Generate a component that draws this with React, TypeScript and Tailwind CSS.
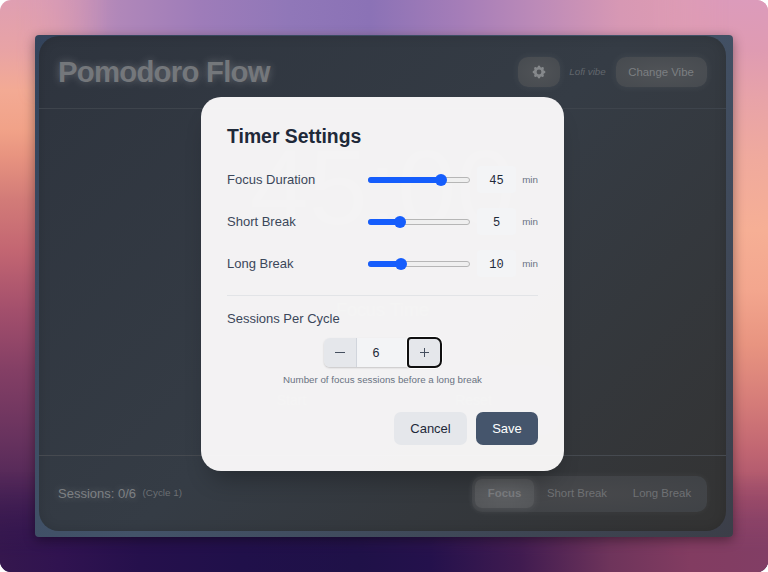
import type { ReactNode } from "react";

const SLIDERS = [
  { label: "Focus Duration", value: 45, fill: 73 },
  { label: "Short Break", value: 5, fill: 31.5 },
  { label: "Long Break", value: 10, fill: 33 },
];

function Wallpaper() {
  return (
    <>
      <div className="absolute inset-0 bg-[linear-gradient(180deg,#df9fb2_0px,#e8a3a5_50px,#f3aa94_90px,#f1a288_130px,#e89480_155px,#d27b78_200px,#c36672_250px,#a34f6c_310px,#843f65_370px,#67325e_440px,#4b2456_500px,#2c124c_560px,#281049_572px)]" />
      <div className="absolute inset-0 bg-[linear-gradient(180deg,#dc9bbb_0px,#df9bb2_50px,#e8a3a8_100px,#f0aa9d_160px,#f6af95_230px,#f3a68e_290px,#e89480_345px,#d67d79_400px,#c16672_450px,#a4506b_500px,#86416a_550px,#7e3d62_572px)] [mask-image:linear-gradient(90deg,transparent_45%,black_90%)]" />
      <div className="absolute inset-x-0 top-0 h-[110px] bg-[linear-gradient(90deg,#df9fb5_0px,#cf95b7_55px,#b087b9_120px,#9e7cb9_200px,#9077b8_290px,#8b72b6_370px,#a57db8_460px,#bd8bb8_540px,#d798b4_620px,#df9cb2_700px,#dc99bb_768px)] [mask-image:linear-gradient(180deg,black_25%,transparent),linear-gradient(90deg,transparent_2%,black_14%,black_85%,transparent_95%)] [mask-composite:intersect]" />
      <div className="absolute inset-x-0 bottom-0 h-[100px] bg-[linear-gradient(90deg,#35174e_0px,#301350_60px,#25104c_140px,#20104a_240px,#1f1148_360px,#24114c_430px,#401b50_520px,#6e345b_610px,#823c61_690px,#823e65_768px)] [mask-image:linear-gradient(0deg,black_15%,transparent)]" />
    </>
  );
}

function GlassButton({ children, className }: { children: ReactNode; className: string }) {
  return (
    <button
      className={
        "flex h-[30px] items-center justify-center rounded-[10px] bg-[radial-gradient(ellipse,#505357,#464a4f)] text-[11.4px] text-[#7c7f82] shadow-[0_0_8px_#ffffff12] " +
        className
      }
    >
      {children}
    </button>
  );
}

function Header() {
  return (
    <header className="flex h-[73px] items-center justify-between border-b border-[#3e444c] pr-[19.5px] pl-[19px]">
      <h1 className="text-[29.3px] leading-9 font-bold tracking-[-0.025em] text-[#74777b] [text-shadow:0_0_9px_#ffffff42]">
        Pomodoro Flow
      </h1>
      <div className="flex items-center gap-[9.75px]">
        <GlassButton className="w-[42px]">
          <svg viewBox="0 0 20 20" className="size-[16px] fill-[#85888b]">
            <path
              fillRule="evenodd"
              d="M11.49 3.17c-.38-1.56-2.6-1.56-2.98 0a1.532 1.532 0 01-2.286.948c-1.372-.836-2.942.734-2.106 2.106.54.886.061 2.042-.947 2.287-1.561.379-1.561 2.6 0 2.978a1.532 1.532 0 01.947 2.287c-.836 1.372.734 2.942 2.106 2.106a1.532 1.532 0 012.287.947c.379 1.561 2.6 1.561 2.978 0a1.533 1.533 0 012.287-.947c1.372.836 2.942-.734 2.106-2.106a1.533 1.533 0 01.947-2.287c1.561-.379 1.561-2.6 0-2.978a1.532 1.532 0 01-.947-2.287c.836-1.372-.734-2.942-2.106-2.106a1.532 1.532 0 01-2.287-.947zM10 13a3 3 0 100-6 3 3 0 000 6z"
            />
          </svg>
        </GlassButton>
        <span className="text-[9.8px] text-[#62676d] italic">Lofi vibe</span>
        <GlassButton className="w-[91px] pt-px">Change Vibe</GlassButton>
      </div>
    </header>
  );
}

function TimerFace() {
  return (
    <main className="flex h-[346px] flex-col items-center">
      <div className="mt-[22px] h-[112px] text-[106px] leading-[112px] text-[#454a51]">45:00</div>
      <div className="mt-[48px] flex h-[38px] w-[134px] items-center justify-center rounded-[10px] bg-[#383f47] text-[18px] text-[#4b5056]">
        Focus Time
      </div>
      <div className="mt-[36px] flex gap-[8px] text-[14px] text-[#4b5056]">
        <div className="flex h-[70px] w-[174px] items-center justify-center rounded-[20px] bg-[#383e46]">Start</div>
        <div className="flex h-[70px] w-[174px] items-center justify-center rounded-[20px] bg-[#383e46]">Reset</div>
      </div>
    </main>
  );
}

function Footer() {
  return (
    <footer className="flex h-[76px] items-center justify-between border-t border-[#464a50] pr-[19px] pl-[19px]">
      <div className="flex items-center gap-[6.5px] text-[13px] text-[#7d8083] [text-shadow:0_0_8px_#ffffff40]">
        <span>Sessions: 0/6</span>
        <span className="text-[9.9px] text-[#6b6f73] [text-shadow:none]">(Cycle 1)</span>
      </div>
      <div className="flex h-[36px] w-[235px] items-center rounded-[10px] bg-[radial-gradient(ellipse,#47484b,#3f4246)] pl-[3px] text-[11.4px] text-[#6f7174] shadow-[0_0_7px_#ffffff0d]">
        <div className="flex h-[29px] w-[59px] items-center justify-center rounded-[7px] bg-[radial-gradient(ellipse,#5f6164,#535558)] font-bold text-[#7a7c7f] shadow-[0_0_8px_#ffffff1c]">
          Focus
        </div>
        <span className="w-[86px] text-center">Short Break</span>
        <span className="w-[84px] text-center">Long Break</span>
      </div>
    </footer>
  );
}

function SliderRow({ label, value, fill }: { label: string; value: number; fill: number }) {
  return (
    <div className="flex h-[29px] items-center">
      <span className="w-[141px] text-[13px] text-[#3b475a]">{label}</span>
      <div className="relative h-[6px] w-[102px] rounded-full border border-[#b6b6b6] bg-[#efefef]">
        <div className="absolute -top-px -left-px h-[6px] rounded-full bg-[#155dfc]" style={{ width: `${fill}%` }} />
        <div
          className="absolute -top-[4px] -ml-[8px] size-[12px] rounded-full bg-[#155dfc]"
          style={{ left: `${fill + 1}%` }}
        />
      </div>
      <span className="ml-[7px] flex h-[27px] w-[39px] items-center justify-center rounded-[4px] bg-[#f3f4f6] pt-[2px] font-['Liberation_Mono',monospace] text-[12px] text-[#1e2939]">
        {value}
      </span>
      <span className="ml-auto pt-[2px] text-[9.8px] text-[#6a7282]">min</span>
    </div>
  );
}

function SettingsDialog() {
  return (
    <div className="absolute top-[97px] left-[201px] flex h-[374px] w-[363px] flex-col rounded-[20px] bg-[#fffefef0] px-[26px] pt-[26px] shadow-[0_16px_24px_-10px_#00000050]">
      <h2 className="h-[26px] text-[19.4px] leading-[26px] font-bold text-[#1e2939]">Timer Settings</h2>
      <div className="mt-[16px] flex flex-col gap-[13px]">
        {SLIDERS.map((row) => (
          <SliderRow key={row.label} {...row} />
        ))}
      </div>
      <div className="mt-[17px] h-px bg-[#e2e4e7]" />
      <div className="mt-[13px] h-[20px] text-[13px] leading-[20px] text-[#3b475a]">Sessions Per Cycle</div>
      <div className="mt-[9px] ml-[97px] flex h-[29px] w-[118px] rounded-[6px] shadow-[0_1px_2px_#00000030]">
        <button className="flex w-[33px] items-center justify-center rounded-l-[6px] border-r border-[#d1d5dc] bg-[#e5e7eb]">
          <span className="h-px w-[10px] bg-[#454f5f]" />
        </button>
        <span className="w-[51px] bg-[#f3f4f6] pl-[15.5px] text-[12.5px] leading-[30px] text-[#1e2939]">6</span>
        <button className="flex w-[33px] items-center justify-center rounded-[3px] rounded-r-[6px] bg-[#e5e7eb] shadow-[0_0_0_2px_white] outline-2 -outline-offset-1 outline-[#101010]">
          <svg viewBox="0 0 10 10" className="size-[10px]" stroke="#454f5f">
            <path d="M0 4.5h9M4.5 0v9" />
          </svg>
        </button>
      </div>
      <div className="mt-[6px] h-[14px] text-center text-[9.75px] leading-[14px] text-[#6a7282]">
        Number of focus sessions before a long break
      </div>
      <div className="mt-[25px] flex justify-end gap-[9px] text-[13px]">
        <button className="h-[33px] w-[73px] rounded-[7px] bg-[#e5e7eb] text-[#1e2939]">Cancel</button>
        <button className="h-[33px] w-[62px] rounded-[7px] bg-[#45556c] text-white">Save</button>
      </div>
    </div>
  );
}

export default function App() {
  return (
    <div className="h-[572px] w-[768px] overflow-hidden bg-white font-['Liberation_Sans',Arial,sans-serif]">
      <div className="relative h-full overflow-hidden rounded-[11px] pt-[35px] pl-[35px]">
        <Wallpaper />
        <div className="relative h-[502px] w-[698px] rounded-[4px] bg-[linear-gradient(135deg,#33435b,#435369_50%,#3b3e48)] pt-px pl-[4px] shadow-[0_3px_12px_#00000066]">
          <div className="h-[495px] w-[687px] overflow-hidden rounded-[20px] bg-[linear-gradient(135deg,#2e343e,#353c45_50%,#333333)] shadow-[inset_0_0_12px_#00000022]">
            <Header />
            <TimerFace />
            <Footer />
          </div>
        </div>
        <SettingsDialog />
      </div>
    </div>
  );
}
